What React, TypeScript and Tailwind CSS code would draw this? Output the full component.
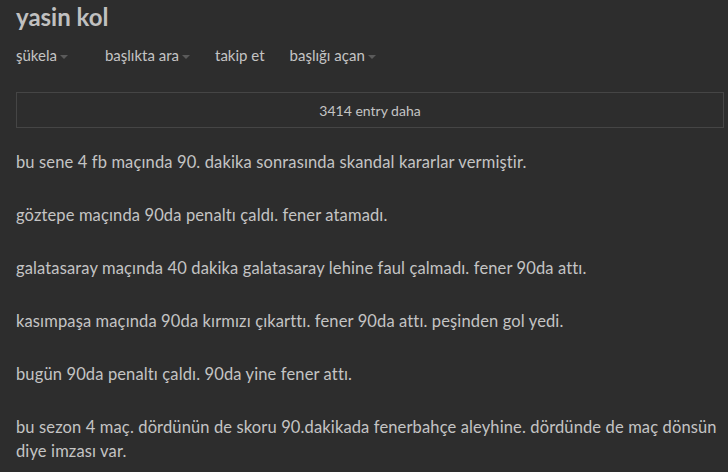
import React from 'react';

const ENTRIES = [
  'bu sene 4 fb maçında 90. dakika sonrasında skandal kararlar vermiştir.',
  'göztepe maçında 90da penaltı çaldı. fener atamadı.',
  'galatasaray maçında 40 dakika galatasaray lehine faul çalmadı. fener 90da attı.',
  'kasımpaşa maçında 90da kırmızı çıkarttı. fener 90da attı. peşinden gol yedi.',
  'bugün 90da penaltı çaldı. 90da yine fener attı.',
  'bu sezon 4 maç. dördünün de skoru 90.dakikada fenerbahçe aleyhine. dördünde de maç dönsün diye imzası var.',
];

const Caret = () => (
  <span className="ml-[3px] inline-block h-0 w-0 border-x-[4px] border-t-[4px] border-x-transparent border-t-[#5a5a5a] align-middle" />
);

export default function App() {
  return (
    <div className="min-h-[472px] bg-[#2d2d2d] pl-4 pr-[4px] font-['Lato',sans-serif] text-[#c4c4c4]">
      <h1 className="pt-[2px] text-[24px] font-bold leading-[30px] text-[#c0c0c0]">yasin kol</h1>

      {/* nav */}
      <div className="mt-[13px] flex items-center text-[15px] leading-[20px]">
        <span className="mr-[37px]">şükela<Caret /></span>
        <span className="mr-[25px]">başlıkta ara<Caret /></span>
        <span className="mr-[25px]">takip et</span>
        <span>başlığı açan<Caret /></span>
      </div>

      <div className="mt-[27px] flex h-[36px] items-center justify-center border border-[#454545] text-[14px] text-[#c4c4c4]">
        3414 entry daha
      </div>

      <ul className="mt-[22px]">
        {ENTRIES.map((e, i) => (
          <li key={i} className="mb-[29px] text-[16.5px] leading-[24px] tracking-[0.13px]">{e}</li>
        ))}
      </ul>
    </div>
  );
}
